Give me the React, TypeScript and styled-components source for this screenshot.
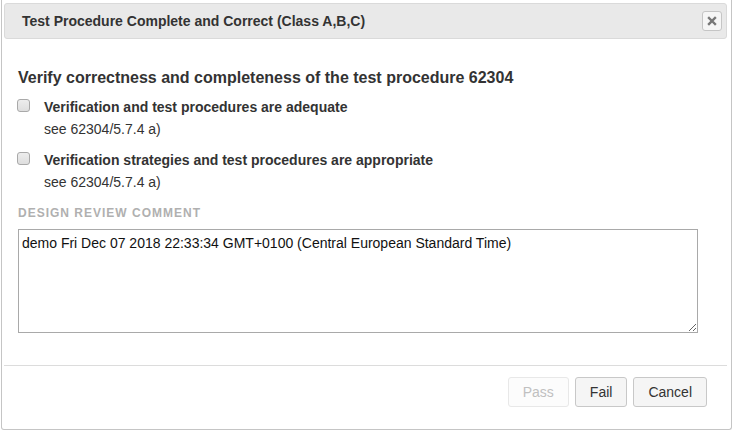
import React from "react";
import styled, { createGlobalStyle } from "styled-components";

const Global = createGlobalStyle`
  html, body { margin: 0; padding: 0; background: #fff; }
  body { font-family: "Liberation Sans", Arial, sans-serif; color: #333; }
  * { box-sizing: border-box; }
`;

const Page = styled.div`
  width: 733px;
  height: 432px;
  padding: 0 1px 2px 1px;
  display: flex;
`;

const Dialog = styled.div`
  flex: 1;
  display: flex;
  flex-direction: column;
  border: 1px solid #c5c5c5;
  border-top: none;
  border-radius: 0 0 3px 3px;
  background: #fff;
  padding: 3px 4px 0 2px;
`;

const Header = styled.div`
  height: 36px;
  display: flex;
  align-items: center;
  justify-content: space-between;
  background: #e9e9e9;
  border: 1px solid #dadada;
  border-radius: 3px;
  padding: 0 4px 0 17px;
`;

const Title = styled.span`
  font-size: 14px;
  font-weight: bold;
  color: #333;
`;

const CloseButton = styled.button`
  width: 20px;
  height: 20px;
  padding: 0;
  display: flex;
  align-items: center;
  justify-content: center;
  background: #f6f6f6;
  border: 1px solid #c5c5c5;
  border-radius: 3px;
`;

const Body = styled.div`
  flex: 1;
  padding: 29px 0 0 14px;
  display: flex;
  flex-direction: column;
`;

const Heading = styled.h3`
  margin: 0 0 9px;
  font-size: 16px;
  font-weight: bold;
  color: #333;
  line-height: 20px;
`;

const Item = styled.div`
  display: grid;
  grid-template-columns: 26px 1fr;
  margin-bottom: 11px;
`;

const Box = styled.span`
  width: 13px;
  height: 13px;
  margin-top: 2px;
  margin-left: -1px;
  border: 1px solid #a9a9a9;
  border-radius: 3px;
  background: linear-gradient(#ededed, #dedede);
`;

const ItemLabel = styled.div`
  font-size: 14px;
  font-weight: bold;
  line-height: 20px;
  color: #333;
`;

const ItemNote = styled.div`
  grid-column: 2;
  font-size: 14px;
  line-height: 20px;
  margin-top: 2px;
  color: #333;
`;

const SectionLabel = styled.div`
  margin-top: 3px;
  font-size: 12px;
  font-weight: bold;
  letter-spacing: 1px;
  color: #b0b0b0;
  line-height: 14px;
`;

const Comment = styled.textarea`
  margin-top: 9px;
  width: 680px;
  height: 104px;
  resize: vertical;
  border: 1px solid #a9a9a9;
  border-radius: 0;
  padding: 4px 3px;
  font-family: "Liberation Sans", Arial, sans-serif;
  font-size: 14px;
  line-height: 18px;
  color: #111;
  outline: none;
`;

const Footer = styled.div`
  border-top: 1px solid #dcdcdc;
  height: 64px;
  display: flex;
  justify-content: flex-end;
  align-items: flex-start;
  gap: 6px;
  padding: 11px 20px 0 0;
`;

const Button = styled.button<{ $disabled?: boolean }>`
  height: 30px;
  padding: 0 14px;
  font-family: "Liberation Sans", Arial, sans-serif;
  font-size: 14px;
  border-radius: 3px;
  background: ${(p) => (p.$disabled ? "#fcfcfc" : "#f5f5f5")};
  border: 1px solid ${(p) => (p.$disabled ? "#e8e8e8" : "#c8c8c8")};
  color: ${(p) => (p.$disabled ? "#c0c0c0" : "#333")};
`;

const items = [
  "Verification and test procedures are adequate",
  "Verification strategies and test procedures are appropriate",
];

export default function App() {
  return (
    <>
      <Global />
      <Page>
        <Dialog>
          <Header>
            <Title>Test Procedure Complete and Correct (Class A,B,C)</Title>
            <CloseButton aria-label="close">
              <svg width="10" height="10" viewBox="0 0 10 10">
                <path d="M2 2 L8 8 M8 2 L2 8" stroke="#777" strokeWidth="2.4" strokeLinecap="square" />
              </svg>
            </CloseButton>
          </Header>
          <Body>
            <Heading>Verify correctness and completeness of the test procedure 62304</Heading>
            {items.map((t) => (
              <Item key={t}>
                <Box />
                <ItemLabel>{t}</ItemLabel>
                <ItemNote>see 62304/5.7.4 a)</ItemNote>
              </Item>
            ))}
            <SectionLabel>DESIGN REVIEW COMMENT</SectionLabel>
            <Comment defaultValue="demo Fri Dec 07 2018 22:33:34 GMT+0100 (Central European Standard Time)" />
          </Body>
          <Footer>
            <Button $disabled>Pass</Button>
            <Button>Fail</Button>
            <Button>Cancel</Button>
          </Footer>
        </Dialog>
      </Page>
    </>
  );
}
